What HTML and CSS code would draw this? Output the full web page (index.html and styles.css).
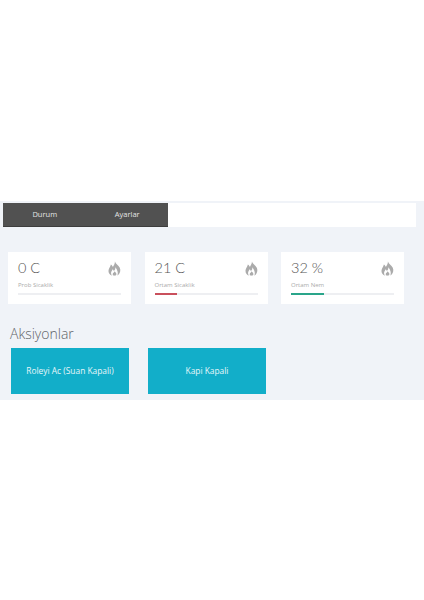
FILE: index.html
```html
<!DOCTYPE html>
<html lang="tr">
<head>
<meta charset="utf-8">
<title>Durum</title>
<link rel="stylesheet" href="styles.css">
</head>
<body>
<main class="panel">
  <nav class="tabbar">
    <div class="tabs">
      <span class="tab">Durum</span>
      <span class="tab">Ayarlar</span>
    </div>
  </nav>
  <section class="cards">
    <article class="card">
      <div class="card-top">
        <span class="value">0 C</span>
        <svg class="flame" viewBox="0 0 16 18"><use href="#flame"></use></svg>
      </div>
      <p class="label">Prob Sicaklik</p>
      <div class="track"></div>
    </article>
    <article class="card">
      <div class="card-top">
        <span class="value">21 C</span>
        <svg class="flame" viewBox="0 0 16 18"><use href="#flame"></use></svg>
      </div>
      <p class="label">Ortam Sicaklik</p>
      <div class="track"><div class="fill fill-red"></div></div>
    </article>
    <article class="card">
      <div class="card-top">
        <span class="value">32 %</span>
        <svg class="flame" viewBox="0 0 16 18"><use href="#flame"></use></svg>
      </div>
      <p class="label">Ortam Nem</p>
      <div class="track"><div class="fill fill-green"></div></div>
    </article>
  </section>
  <h2 class="heading">Aksiyonlar</h2>
  <section class="actions">
    <div class="action">Roleyi Ac (Suan Kapali)</div>
    <div class="action">Kapi Kapali</div>
  </section>
</main>
<svg class="defs" width="0" height="0">
  <symbol id="flame" viewBox="0 0 16 18">
    <path fill="#ababab" fill-rule="evenodd" d="M8.500 0C9 3 13 5 14.500 8C16 11 15 15.500 11.500 18C12.500 15 12.500 12 9 7.500C9.200 10 8.500 11 7.200 12C6.800 11 6.300 10.500 5.800 10C5 11.500 3.500 13 3.800 15C4 16.300 4.500 17.300 5.500 18C2 17 0 14 0.800 10.500C1.300 8 3 6.500 3.500 4C5 5 5.500 6 6 7C7 5 8.800 3 8.500 0ZM8.200 12.500C9 14 10.500 14.500 10.300 16C10.200 17.200 9.200 18 8 18C6.800 18 5.800 17.200 5.800 16C5.800 14.500 7.800 14 8.200 12.500Z"/>
  </symbol>
</svg>
</body>
</html>
```
FILE: styles.css
```css
html, body {
  margin: 0;
  padding: 0;
  background: #fff;
}
body {
  height: 600px;
  overflow: hidden;
  font-family: "Open Sans", "Liberation Sans", sans-serif;
}
.panel {
  margin-top: 201px;
  height: 199px;
  box-sizing: border-box;
  padding: 2px 8px 0 3px;
  background: #f0f3f8;
  overflow: hidden;
}
.tabbar {
  height: 24px;
  background: #fff;
}
.tabs {
  display: flex;
  width: 165px;
  height: 23px;
  background: #515151;
  border: 0 solid #3d3d3d;
  border-bottom-width: 1px;
}
.tab {
  width: 82px;
  padding-left: 1px;
  text-align: center;
  font-size: 7.5px;
  line-height: 23px;
  color: #e4e4e4;
}
.cards {
  display: flex;
  gap: 13.500px;
  margin: 25px 0 0 5px;
}
.card {
  width: 123px;
  height: 52px;
  box-sizing: border-box;
  padding: 7px 10px 0;
  background: #fff;
}
.card-top {
  display: flex;
  justify-content: space-between;
  height: 19px;
}
.value {
  font-family: "Lato", "Open Sans", sans-serif;
  font-weight: 300;
  font-size: 14.500px;
  line-height: 18px;
  color: #555;
}
.flame {
  width: 13px;
  height: 15px;
  margin-top: 2px;
}
.label {
  margin: 3px 0 0;
  font-size: 6px;
  line-height: 9px;
  color: #aaa;
}
.track {
  height: 2px;
  margin-top: 3px;
  background: #eeeff2;
}
.fill {
  height: 2px;
}
.fill-red {
  width: 22px;
  background: #c9505c;
}
.fill-green {
  width: 33px;
  background: #2aa58a;
}
.heading {
  margin: 20px 0 0 7px;
  font-family: "Open Sans", sans-serif;
  font-weight: 300;
  font-size: 14px;
  line-height: 20px;
  color: #5f6368;
}
.actions {
  display: flex;
  gap: 19px;
  margin: 4px 0 0 8px;
}
.action {
  width: 118px;
  height: 46px;
  background: #12aec9;
  color: #e8f6f9;
  font-size: 8.400px;
  line-height: 46px;
  text-align: center;
}
.defs {
  position: absolute;
}
```
